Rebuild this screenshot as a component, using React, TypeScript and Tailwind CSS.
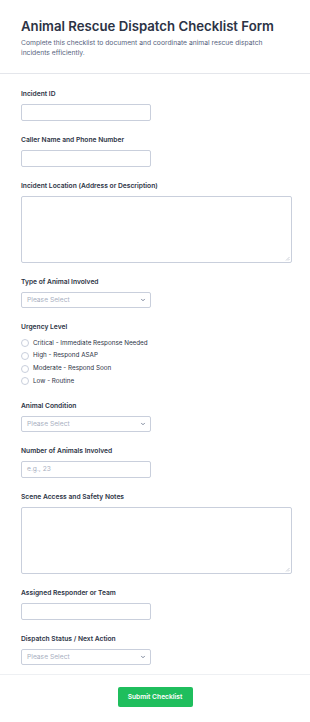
import { ChevronDown } from 'lucide-react';

const font = { fontFamily: 'Inter, "Noto Sans", sans-serif' };

function Label({ children }: { children: React.ReactNode }) {
  return <div className="text-[6.7px] font-semibold text-[#2c3345] leading-[10px] mb-[5px]">{children}</div>;
}

function TextInput({ placeholder }: { placeholder?: string }) {
  return (
    <div className="w-[130px] h-[17px] border border-[#c9cfdc] rounded-[2px] bg-white flex items-center px-[5px]">
      {placeholder && <span className="text-[6.7px] text-[#a9b0bf]">{placeholder}</span>}
    </div>
  );
}

function TextArea() {
  return (
    <div className="relative w-[271px] h-[67px] border border-[#c9cfdc] rounded-[2px] bg-white">
      <svg className="absolute right-[1px] bottom-[1px]" width="5" height="5" viewBox="0 0 5 5">
        <path d="M4.5 1 L1 4.5 M4.5 3 L3 4.5" stroke="#b8bdc8" strokeWidth="0.7" />
      </svg>
    </div>
  );
}

function Select() {
  return (
    <div className="w-[130px] h-[16px] border border-[#c9cfdc] rounded-[2px] bg-white flex items-center justify-between pl-[5px] pr-[4px]">
      <span className="text-[6.7px] text-[#a9b0bf]">Please Select</span>
      <ChevronDown className="w-[6px] h-[6px] text-[#57647e]" strokeWidth={3} />
    </div>
  );
}

function Radio({ label }: { label: string }) {
  return (
    <div className="flex items-center gap-[4px] h-[12.7px]">
      <div className="w-[8px] h-[8px] rounded-full border border-[#c9cfdc] bg-white" />
      <span className="text-[6.3px] text-[#2c3345]">{label}</span>
    </div>
  );
}

export default function App() {
  return (
    <div className="w-[310px] min-h-[722px] bg-white" style={font}>
      {/* Header */}
      <div className="px-[21px] pt-[17px] pb-[15px] border-b border-[#e4e6eb]">
        <h1 className="text-[13.2px] font-semibold text-[#2c3345] leading-[18px] whitespace-nowrap">
          Animal Rescue Dispatch Checklist Form
        </h1>
        <p className="mt-[3px] text-[6.75px] text-[#57647e] leading-[10px] w-[250px]">
          Complete this checklist to document and coordinate animal rescue dispatch incidents efficiently.
        </p>
      </div>

      {/* Fields */}
      <div className="px-[21px] pt-[15px] flex flex-col">
        <div className="mb-[14px]">
          <Label>Incident ID</Label>
          <TextInput />
        </div>
        <div className="mb-[14px]">
          <Label>Caller Name and Phone Number</Label>
          <TextInput />
        </div>
        <div className="mb-[14px]">
          <Label>Incident Location (Address or Description)</Label>
          <TextArea />
        </div>
        <div className="mb-[14px]">
          <Label>Type of Animal Involved</Label>
          <Select />
        </div>
        <div className="mb-[13px]">
          <Label>Urgency Level</Label>
          <div className="flex flex-col">
            <Radio label="Critical - Immediate Response Needed" />
            <Radio label="High - Respond ASAP" />
            <Radio label="Moderate - Respond Soon" />
            <Radio label="Low - Routine" />
          </div>
        </div>
        <div className="mb-[14px]">
          <Label>Animal Condition</Label>
          <Select />
        </div>
        <div className="mb-[14px]">
          <Label>Number of Animals Involved</Label>
          <TextInput placeholder="e.g., 23" />
        </div>
        <div className="mb-[14px]">
          <Label>Scene Access and Safety Notes</Label>
          <TextArea />
        </div>
        <div className="mb-[14px]">
          <Label>Assigned Responder or Team</Label>
          <TextInput />
        </div>
        <div className="mb-[9px]">
          <Label>Dispatch Status / Next Action</Label>
          <Select />
        </div>
      </div>

      {/* Footer */}
      <div className="border-t border-[#eef0f3] flex justify-center pt-[12px] pb-[17px]">
        <button className="w-[75px] h-[20px] rounded-[2px] bg-[#1fbe5d] text-white text-[6.7px] font-semibold">
          Submit Checklist
        </button>
      </div>
    </div>
  );
}
